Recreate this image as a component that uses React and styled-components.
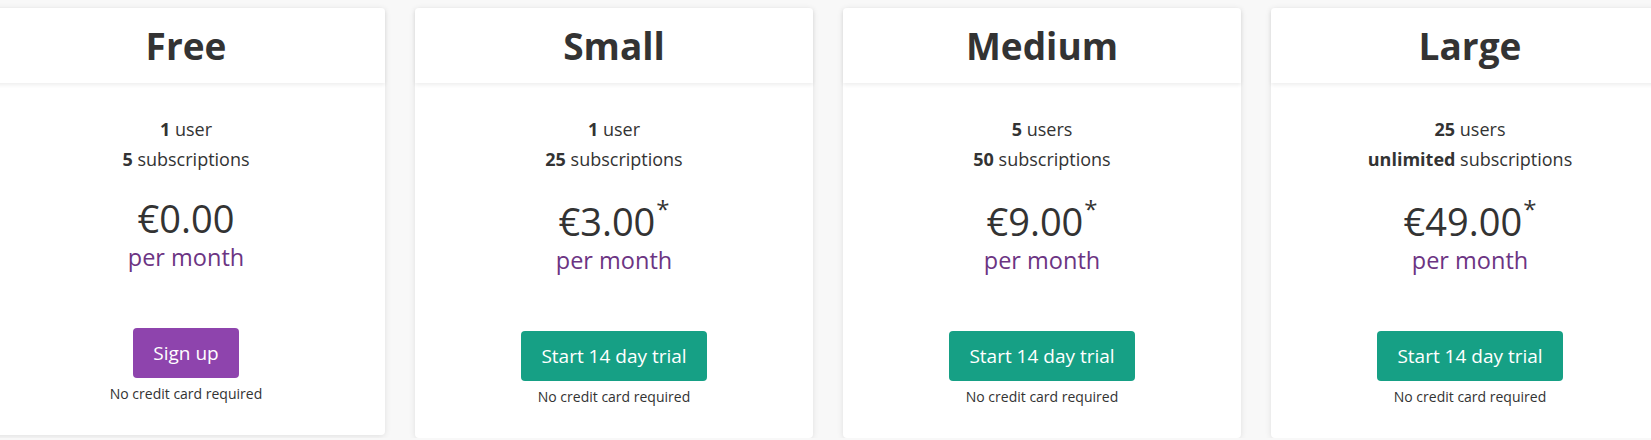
import React from "react";
import styled, { createGlobalStyle } from "styled-components";

const plans = [
  { name: "Free", users: "1", userLabel: "user", subs: "5", price: "€0.00", trial: false },
  { name: "Small", users: "1", userLabel: "user", subs: "25", price: "€3.00", trial: true },
  { name: "Medium", users: "5", userLabel: "users", subs: "50", price: "€9.00", trial: true },
  { name: "Large", users: "25", userLabel: "users", subs: "unlimited", price: "€49.00", trial: true },
];

const PlanCard = ({ plan }) => (
  <Card>
    <Header>
      <Title>{plan.name}</Title>
    </Header>
    <Body>
      <Feature>
        <b>{plan.users}</b> {plan.userLabel}
      </Feature>
      <Feature>
        <b>{plan.subs}</b> subscriptions
      </Feature>
      <Price starred={plan.trial}>
        {plan.price}
        {plan.trial && <Star>*</Star>}
      </Price>
      <Period>per month</Period>
      <Action trial={plan.trial}>{plan.trial ? "Start 14 day trial" : "Sign up"}</Action>
      <Note>No credit card required</Note>
    </Body>
  </Card>
);

const App = () => {
  return (
    <React.Fragment>
      <GlobalStyle />
      <Row>
        {plans.map((p) => (
          <PlanCard key={p.name} plan={p} />
        ))}
      </Row>
    </React.Fragment>
  );
};

export default App;

const GlobalStyle = createGlobalStyle`
  body {
    margin: 0;
    background: #f8f8f8;
    font-family: "Open Sans", "Noto Sans", sans-serif;
    color: #333;
    overflow: hidden;
  }
`;

const Row = styled.div`
  display: flex;
  align-items: flex-start;
  gap: 30px;
  padding-top: 8px;
  margin-left: -13px;
`;

const Card = styled.div`
  flex: 0 0 398px;
  background: #fff;
  border-radius: 4px;
  box-shadow: 0 1px 6px rgba(0, 0, 0, 0.1);
`;

const Header = styled.div`
  height: 75px;
  display: flex;
  align-items: center;
  justify-content: center;
  box-shadow: 0 2px 4px rgba(0, 0, 0, 0.07);
`;

const Title = styled.h2`
  margin: 0;
  font-size: 37px;
  font-weight: 700;
  color: #333;
`;

const Body = styled.div`
  display: flex;
  flex-direction: column;
  align-items: center;
  padding: 31px 0 31px;
`;

const Feature = styled.div`
  font-size: 18px;
  line-height: 30px;
  b {
    font-weight: 700;
  }
`;

const Price = styled.div`
  margin-top: ${(p) => (p.starred ? "25px" : "22px")};
  font-size: 38px;
  line-height: 44px;
`;

const Star = styled.sup`
  font-size: 24px;
  line-height: 0;
  position: relative;
  top: -4px;
  margin-left: 1px;
`;

const Period = styled.div`
  margin-top: 2px;
  font-size: 23.5px;
  line-height: 30px;
  color: #6c3483;
`;

const Action = styled.button`
  margin-top: 56px;
  height: 50px;
  padding: 0 20px;
  border: none;
  border-radius: 4px;
  background: ${(p) => (p.trial ? "#16a085" : "#8e44ad")};
  color: #fff;
  font-family: inherit;
  font-size: 19px;
  cursor: pointer;
`;

const Note = styled.div`
  margin-top: 6px;
  font-size: 14px;
  line-height: 20px;
`;
